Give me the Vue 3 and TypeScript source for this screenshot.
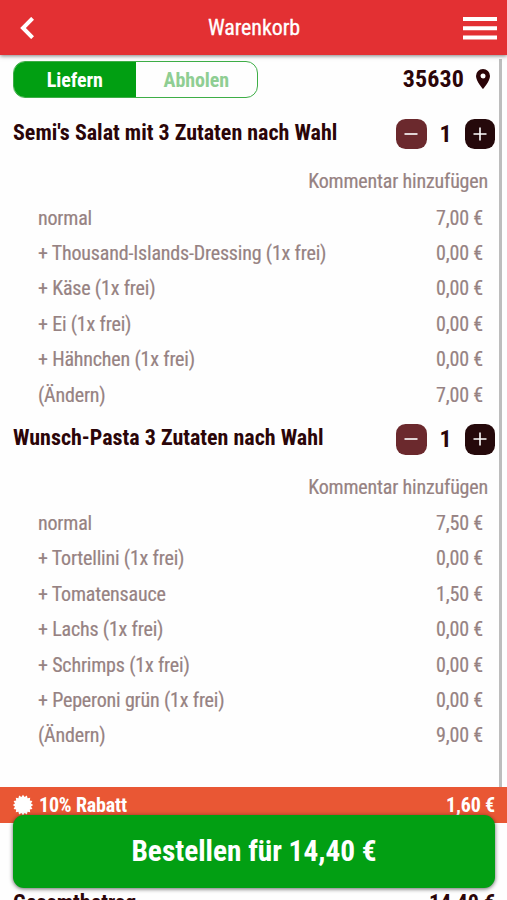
<script setup lang="ts">
interface Line { label: string; price: string }
interface Item { title: string; count: number; lines: Line[] }

const items: Item[] = [
  {
    title: "Semi's Salat mit 3 Zutaten nach Wahl",
    count: 1,
    lines: [
      { label: 'normal', price: '7,00 €' },
      { label: '+ Thousand-Islands-Dressing (1x frei)', price: '0,00 €' },
      { label: '+ Käse (1x frei)', price: '0,00 €' },
      { label: '+ Ei (1x frei)', price: '0,00 €' },
      { label: '+ Hähnchen (1x frei)', price: '0,00 €' },
      { label: '(Ändern)', price: '7,00 €' },
    ],
  },
  {
    title: 'Wunsch-Pasta 3 Zutaten nach Wahl',
    count: 1,
    lines: [
      { label: 'normal', price: '7,50 €' },
      { label: '+ Tortellini (1x frei)', price: '0,00 €' },
      { label: '+ Tomatensauce', price: '1,50 €' },
      { label: '+ Lachs (1x frei)', price: '0,00 €' },
      { label: '+ Schrimps (1x frei)', price: '0,00 €' },
      { label: '+ Peperoni grün (1x frei)', price: '0,00 €' },
      { label: '(Ändern)', price: '9,00 €' },
    ],
  },
]

const badgePoints = Array.from({ length: 32 }, (_, i) => {
  const r = i % 2 === 0 ? 10.2 : 8.2
  const a = (i * Math.PI) / 16
  return `${(10 + r * Math.sin(a)).toFixed(2)},${(10 - r * Math.cos(a)).toFixed(2)}`
}).join(' ')
</script>

<template>
  <div class="screen">
    <header class="bar">
      <svg class="back" viewBox="0 0 14 22"><path d="M12.6 1.3 3 11l9.6 9.7" /></svg>
      <h1>Warenkorb</h1>
      <svg class="menu" viewBox="0 0 34 24"><path d="M0 3h34M0 12.3h34M0 21.5h34" /></svg>
    </header>

    <main class="cart">
      <div class="mode">
        <div class="toggle">
          <span class="on">Liefern</span>
          <span class="off">Abholen</span>
        </div>
        <div class="zip">
          <span>35630</span>
          <svg viewBox="0 0 14 20"><path fill-rule="evenodd" d="M7 0a7 7 0 0 0-7 7c0 5.2 7 13 7 13s7-7.8 7-13a7 7 0 0 0-7-7zm0 4.5a2.5 2.5 0 1 1 0 5 2.5 2.5 0 0 1 0-5z" /></svg>
        </div>
      </div>

      <section v-for="item in items" :key="item.title" class="item">
        <div class="head">
          <h2>{{ item.title }}</h2>
          <div class="stepper">
            <button class="minus"><svg viewBox="0 0 14 14"><path d="M.5 7h13" /></svg></button>
            <span>{{ item.count }}</span>
            <button><svg viewBox="0 0 14 14"><path d="M.5 7h13M7 .5v13" /></svg></button>
          </div>
        </div>
        <div class="comment">Kommentar hinzufügen</div>
        <div v-for="line in item.lines" :key="line.label" class="line">
          <span>{{ line.label }}</span>
          <span>{{ line.price }}</span>
        </div>
      </section>

      <div class="discount">
        <svg viewBox="0 0 20 20"><polygon :points="badgePoints" /></svg>
        <span>10% Rabatt</span>
        <span class="amount">1,60 €</span>
      </div>
      <div class="total"><span>Gesamtbetrag</span><span>14,40 €</span></div>
    </main>

    <div class="scrollbar"></div>
    <button class="order">Bestellen für 14,40 €</button>
  </div>
</template>

<style>
body { margin: 0; background: #fff; }
</style>

<style scoped>
.screen {
  position: relative;
  width: 507px;
  height: 900px;
  overflow: hidden;
  background: #fefefe;
  color: #2b0508;
  font-family: "Roboto Condensed", Roboto, sans-serif;
  font-stretch: 75%;
  font-size: 20px;
  line-height: 1.2;
}
h1, h2 { margin: 0; }
button { border: 0; padding: 0; font: inherit; color: #fff; }
.bar {
  position: relative;
  z-index: 1;
  box-sizing: border-box;
  height: 55px;
  padding: 0 10px 0 20px;
  display: grid;
  grid-template-columns: 34px 1fr 34px;
  align-items: center;
  background: #e33033;
  color: #fff;
  box-shadow: 0 1px 4px rgba(0, 0, 0, .5);
}
.bar h1 {
  font-size: 22px;
  font-weight: 400;
  text-align: center;
  letter-spacing: -.1px;
  padding: 2px 9px 0 0;
  -webkit-text-stroke: .3px #fff;
}
.bar svg { fill: none; stroke: #fff; stroke-width: 4; }
.back { width: 14px; height: 22px; }
.menu { width: 34px; height: 24px; }
.mode {
  display: flex;
  justify-content: space-between;
  align-items: center;
  height: 37px;
  padding: 6px 17px 0 13px;
  margin-bottom: 8.7px;
}
.toggle {
  box-sizing: border-box;
  display: flex;
  width: 245px;
  height: 37px;
  border: 1px solid #3eae47;
  border-radius: 12px;
  overflow: hidden;
  font-weight: 700;
  letter-spacing: -.1px;
}
.toggle span { flex: 1; display: grid; place-items: center; }
.on { background: #019f12; color: #fff; }
.off { color: #8fce93; }
.zip { display: flex; align-items: center; gap: 12px; font-size: 24px; font-weight: 700; letter-spacing: .1px; }
.zip svg { width: 14px; height: 20px; fill: #2b0508; }
.head {
  display: flex;
  align-items: center;
  justify-content: space-between;
  height: 54.6px;
  padding: 0 12px 0 13px;
}
.head h2 { font-size: 22px; font-weight: 700; padding-bottom: 1.6px; }
.stepper { display: flex; align-items: center; font-size: 24px; font-weight: 700; }
.stepper span { width: 38px; text-align: center; }
.stepper button {
  width: 30.5px;
  height: 30.5px;
  border-radius: 9.5px;
  display: grid;
  place-items: center;
  background: #25090b;
}
.stepper .minus { background: #6b292d; }
.stepper svg { width: 14px; height: 14px; fill: none; stroke: #fff; stroke-width: 1.6; }
.comment, .line { color: #968282; letter-spacing: -.18px; -webkit-text-stroke: .2px #968282; }
.comment { height: 37.5px; line-height: 38.5px; padding: 1px 19px 0 0; text-align: right; }
.line {
  box-sizing: border-box;
  display: flex;
  justify-content: space-between;
  height: 35.4px;
  line-height: 35.4px;
  padding: .8px 24px 0 38px;
}
.discount {
  display: flex;
  align-items: center;
  gap: 6px;
  height: 36.8px;
  margin-top: 33.6px;
  padding: 0 12px 0 13px;
  background: #e95734;
  color: #fff;
  font-weight: 700;
  letter-spacing: -.17px;
}
.discount svg { width: 20px; height: 20px; fill: #fff; overflow: visible; }
.discount span { padding-top: 1px; }
.amount { margin-left: auto; }
.total {
  display: flex;
  justify-content: space-between;
  padding: 66.5px 12px 0 13px;
  font-size: 22px;
  font-weight: 700;
}
.scrollbar { position: absolute; top: 59px; right: 5px; width: 3px; height: 728px; background: #bdbdbd; }
.order {
  position: absolute;
  left: 13px;
  top: 815px;
  width: 482px;
  height: 73px;
  border-radius: 11px;
  background: #029f13;
  box-shadow: 0 1px 4px rgba(0, 0, 0, .6);
  font-size: 29.3px;
  font-weight: 700;
}
</style>
